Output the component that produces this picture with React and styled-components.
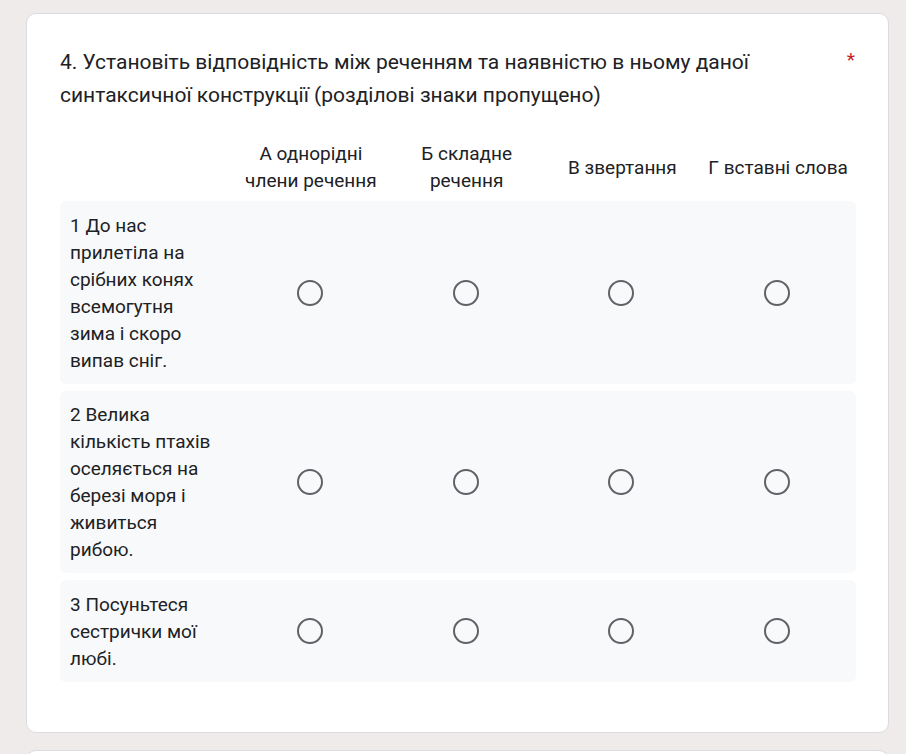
import styled, { createGlobalStyle } from 'styled-components';

const GlobalStyle = createGlobalStyle`
  html, body {
    margin: 0;
    padding: 0;
    background: #f0ebeb;
  }
  body {
    font-family: Roboto, "Noto Sans", sans-serif;
    color: #202124;
  }
`;

const Page = styled.div`
  display: flex;
  flex-direction: column;
  gap: 17px;
  padding: 13px 17px 0 26px;
`;

const Card = styled.div`
  background: #fff;
  border: 1px solid #dadce0;
  border-radius: 10px;
  padding: ${(props) => (props.$empty ? '40px' : '32px 32px 50px 33px')};
`;

const TitleRow = styled.div`
  display: flex;
  justify-content: space-between;
  align-items: flex-start;
  gap: 24px;
`;

const Title = styled.h2`
  margin: 0;
  font-family: Roboto, "Noto Sans", sans-serif;
  font-weight: 400;
  font-size: 21px;
  line-height: 33px;
  color: #202124;
  max-width: 720px;
`;

const Required = styled.span`
  color: #c5221f;
  font-size: 19px;
  line-height: 28px;
  margin-right: 1px;
`;

const Grid = styled.div`
  display: flex;
  flex-direction: column;
  gap: 7px;
  margin-top: 28px;
`;

const Row = styled.div`
  display: grid;
  grid-template-columns: 173px repeat(4, 1fr);
  align-items: center;
  background: ${(props) => (props.$header ? 'transparent' : '#f8f9fa')};
  border-radius: 6px;
  padding: ${(props) => (props.$header ? '0' : '10.5px 0 10px')};
`;

const ColHead = styled.div`
  font-size: 19px;
  line-height: 27px;
  text-align: center;
  padding: 0 4px;
`;

const RowLabel = styled.div`
  font-size: 19px;
  line-height: 27px;
  padding: 0 10px;
`;

const Cell = styled.div`
  display: flex;
  justify-content: center;
  align-items: center;
`;

const Radio = styled.span`
  display: block;
  width: 22px;
  height: 22px;
  margin-left: -2px;
  border: 2.5px solid #5f6368;
  border-radius: 50%;
`;

const columns = [
  ['А однорідні', 'члени речення'],
  ['Б складне', 'речення'],
  ['В звертання'],
  ['Г вставні слова'],
];

const rows = [
  ['1 До нас', 'прилетіла на', 'срібних конях', 'всемогутня', 'зима і скоро', 'випав сніг.'],
  ['2 Велика', 'кількість птахів', 'оселяється на', 'березі моря і', 'живиться', 'рибою.'],
  ['3 Посуньтеся', 'сестрички мої', 'любі.'],
];

export default function App() {
  return (
    <>
      <GlobalStyle />
      <Page>
        <Card>
          <TitleRow>
            <Title>
              4. Установіть відповідність між реченням та наявністю в ньому даної синтаксичної
              конструкції (розділові знаки пропущено)
            </Title>
            <Required>*</Required>
          </TitleRow>
          <Grid>
            <Row $header>
              <div />
              {columns.map((c, i) => (
                <ColHead key={i}>
                  {c.map((line, j) => (
                    <div key={j}>{line}</div>
                  ))}
                </ColHead>
              ))}
            </Row>
            {rows.map((r, i) => (
              <Row key={i}>
                <RowLabel>
                  {r.map((line, j) => (
                    <div key={j}>{line}</div>
                  ))}
                </RowLabel>
                {columns.map((_, k) => (
                  <Cell key={k}>
                    <Radio />
                  </Cell>
                ))}
              </Row>
            ))}
          </Grid>
        </Card>
        <Card $empty />
      </Page>
    </>
  );
}
